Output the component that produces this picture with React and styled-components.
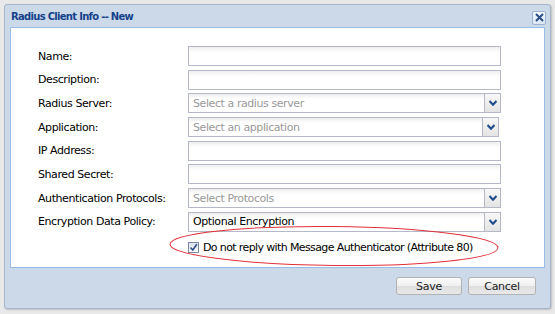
import styled, { createGlobalStyle } from 'styled-components';

const Global = createGlobalStyle`
  html, body {
    margin: 0;
    padding: 0;
    background: #e9e9e9;
    font-family: Tahoma, "DejaVu Sans", "Liberation Sans", sans-serif;
  }
`;

const Page = styled.div`
  width: 555px;
  height: 314px;
  padding: 4px 0 0 4px;
  box-sizing: border-box;
  overflow: hidden;
`;

const Win = styled.div`
  width: 547px;
  height: 305px;
  box-sizing: border-box;
  border: 1px solid #a5b6cc;
  border-radius: 3px;
  background: #ccd9e8;
  box-shadow: 1px 1px 2px rgba(0, 0, 0, 0.18);
  display: flex;
  flex-direction: column;
`;

const Header = styled.div`
  height: 22px;
  display: flex;
  align-items: center;
  justify-content: space-between;
  padding: 0 4px 0 6px;
`;

const Title = styled.span`
  font: bold 10px Tahoma, "DejaVu Sans", sans-serif;
  letter-spacing: -0.7px;
  color: #15428b;
`;

const Close = styled.button`
  width: 14px;
  height: 14px;
  padding: 0;
  margin-top: 3px;
  border: 1px solid #9cb3d1;
  border-radius: 2px;
  background: linear-gradient(#f4f8fd, #dbe6f4);
  display: flex;
  align-items: center;
  justify-content: center;
`;

const Body = styled.div`
  position: relative;
  margin: 0 5px;
  height: 241px;
  box-sizing: border-box;
  background: #fff;
  border: 1px solid #99bbe8;
  padding: 18px 0 0 27px;
`;

const Form = styled.div`
  display: grid;
  grid-template-columns: 150px 313px;
  row-gap: 3.7px;
  align-items: center;
`;

const Label = styled.label`
  font-size: 11px;
  color: #000;
  letter-spacing: -0.42px;
`;

const Field = styled.div`
  height: 20px;
  box-sizing: border-box;
  border: 1px solid #b5b8c8;
  background: linear-gradient(#eeeeee, #ffffff 5px);
  display: flex;
  align-items: center;
  width: ${p => (p.$narrow ? '311px' : '313px')};
`;

const Text = styled.span`
  flex: 1;
  padding-left: 4px;
  font-size: 11px;
  letter-spacing: -0.42px;
  color: ${p => (p.$muted ? '#9a9a9a' : '#000')};
  white-space: nowrap;
`;

const Trigger = styled.span`
  width: 15px;
  height: 100%;
  border-left: 1px solid #b5b8c8;
  background: linear-gradient(#f7f7f7, #e4e4e4);
  display: flex;
  align-items: center;
  justify-content: center;
`;

const CheckRow = styled.div`
  grid-column: 2;
  display: flex;
  align-items: center;
  gap: 4px;
  margin-top: 5px;
  font-size: 11px;
  letter-spacing: -0.62px;
  white-space: nowrap;
`;

const Box = styled.span`
  width: 11px;
  height: 11px;
  box-sizing: border-box;
  border: 1px solid #7c8ba5;
  background: linear-gradient(#dde3ee, #f8f9fb);
  display: flex;
  align-items: center;
  justify-content: center;
`;

const Ring = styled.svg`
  position: absolute;
  left: 156px;
  top: 196px;
  pointer-events: none;
`;

const Footer = styled.div`
  flex: 1;
  display: flex;
  justify-content: flex-end;
  align-items: flex-start;
  gap: 6px;
  padding: 9px 14px 0 0;
`;

const Btn = styled.button`
  width: ${p => p.$w}px;
  height: 18px;
  padding: 0;
  border: 1px solid #b2b2b2;
  border-radius: 3px;
  background: linear-gradient(#fbfbfb 0%, #efefef 50%, #dedede 51%, #e9e9e9 100%);
  font: 11px Tahoma, "DejaVu Sans", sans-serif;
  letter-spacing: -0.3px;
  color: #222;
`;

const Chevron = () => (
  <svg width="8" height="6" viewBox="0 0 8 6">
    <path d="M0.5 1 L4 4.8 L7.5 1" fill="none" stroke="#1e4a8c" strokeWidth="2" />
  </svg>
);

const rows = [
  { label: 'Name:' },
  { label: 'Description:' },
  { label: 'Radius Server:', value: 'Select a radius server', muted: true, select: true },
  { label: 'Application:', value: 'Select an application', muted: true, select: true, narrow: true },
  { label: 'IP Address:' },
  { label: 'Shared Secret:' },
  { label: 'Authentication Protocols:', value: 'Select Protocols', muted: true, select: true },
  { label: 'Encryption Data Policy:', value: 'Optional Encryption', select: true },
];

export default function App() {
  return (
    <Page>
      <Global />
      <Win>
        <Header>
          <Title>Radius Client Info -- New</Title>
          <Close aria-label="close">
            <svg width="9" height="9" viewBox="0 0 9 9">
              <path d="M1 1 L8 8 M8 1 L1 8" stroke="#2a4f88" strokeWidth="2" />
            </svg>
          </Close>
        </Header>
        <Body>
          <Form>
            {rows.map(r => [
              <Label key={r.label + 'l'}>{r.label}</Label>,
              <Field key={r.label + 'f'} $narrow={r.narrow}>
                <Text $muted={r.muted}>{r.value || ''}</Text>
                {r.select && (
                  <Trigger>
                    <Chevron />
                  </Trigger>
                )}
              </Field>,
            ])}
            <CheckRow>
              <Box>
                <svg width="9" height="9" viewBox="0 0 9 9">
                  <path d="M1.5 4.5 L3.8 7 L7.8 1.2" fill="none" stroke="#2b4a86" strokeWidth="1.5" />
                </svg>
              </Box>
              <span>Do not reply with Message Authenticator (Attribute 80)</span>
            </CheckRow>
          </Form>
          <Ring width="336" height="46" viewBox="0 0 336 46">
            <ellipse cx="167" cy="22" rx="164" ry="19.5" fill="none" stroke="#e0303a" strokeWidth="1" transform="rotate(0.6 167 22)" />
          </Ring>
        </Body>
        <Footer>
          <Btn $w={66}>Save</Btn>
          <Btn $w={68}>Cancel</Btn>
        </Footer>
      </Win>
    </Page>
  );
}
